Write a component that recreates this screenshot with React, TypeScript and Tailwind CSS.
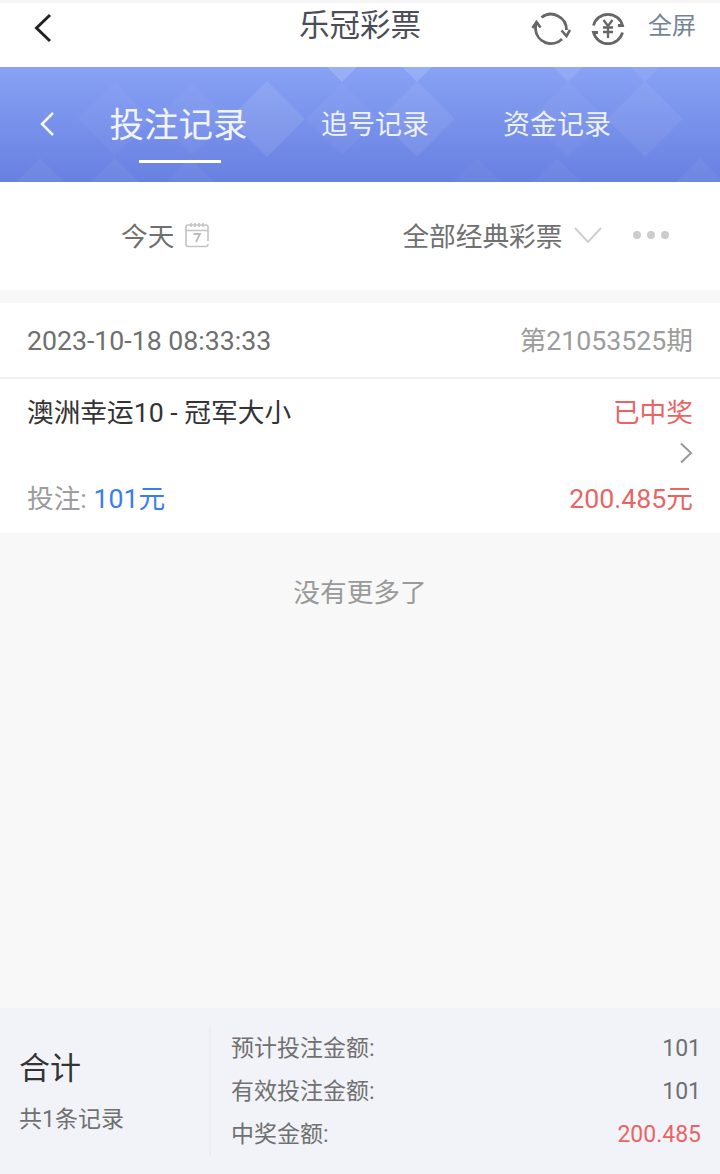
import React from "react";

const diamonds = [
  [115, 119, 37, 0.03], [192, 119, 36, 0.04], [267, 119, 38, 0.09], [342, 67, 15, 0.16], [40, 182, 24, 0.05],
  [115, 182, 24, 0.05], [190, 182, 24, 0.04], [342, 119, 36, 0.04], [417, 119, 38, 0.07], [417, 67, 15, 0.14],
  [568, 67, 15, 0.1], [568, 119, 38, 0.04], [645, 119, 38, 0.06], [645, 67, 15, 0.06], [477, 182, 24, 0.03],
  [557, 182, 24, 0.04], [700, 182, 24, 0.05],
];

const BannerPattern = () => (
  <svg className="absolute inset-0 w-full h-full" viewBox="0 67 720 115" preserveAspectRatio="none">
    {diamonds.map(([x, y, r, o], i) => (
      <polygon key={i} points={`${x},${y - r} ${x + r},${y} ${x},${y + r} ${x - r},${y}`} fill="white" fillOpacity={o} />
    ))}
  </svg>
);

const RefreshIcon = () => (
  <svg width="40" height="40" viewBox="0 0 40 40" fill="none" stroke="#666" strokeWidth="2.800">
    <path d="M10.500 8.500 A15.500 15.500 0 0 1 35.500 21" />
    <path d="M31 30 A15.500 15.500 0 0 1 4.500 20 L5 14" />
    <path d="M1.500 19 L5.500 13 L9.500 18.500" strokeWidth="2.600" />
    <path d="M30.500 21.500 L35.500 27 L39 21" strokeWidth="2.600" />
  </svg>
);

const MoneyIcon = () => (
  <svg width="34" height="34" viewBox="0 0 34 34" fill="none" stroke="#666" strokeWidth="2.800">
    <path d="M2.500 13.500 A15 15 0 0 1 31.500 13.500 H27" />
    <path d="M31.500 20.500 A15 15 0 0 1 2.500 20.500 H7" />
    <path d="M12.500 8 L17 14 L21.500 8 M12 15.500 H22 M12 20 H22 M17 14 V26" strokeWidth="2.300" />
  </svg>
);

const CalendarIcon = () => (
  <svg width="24" height="26" viewBox="0 0 24 26" fill="none" stroke="#c4c4c4" strokeWidth="1.600">
    <path d="M23 19 V5 Q23 3 21 3 H3 Q1 3 1 5 V22 Q1 24.500 3 24.500 H21 Q23 24.500 23 22" />
    <path d="M1 8.500 H23 M6 1 V5 M10 1 V5 M14 1 V5 M18 1 V5" />
    <path d="M8.500 12 H15 L11 20" strokeWidth="1.800" stroke="#bbb" />
  </svg>
);

export default function App() {
  return (
    <div className="w-[720px] h-[1174px] flex flex-col bg-[#f8f8f8] overflow-hidden font-['Roboto','Noto_Sans_CJK_SC',sans-serif]">
      {/* 顶部栏 */}
      <header className="relative h-[67px] shrink-0 bg-white border-t-[3px] border-[#f5f5f5] flex items-center justify-between pl-[33px] pr-[24px]">
        <svg width="20" height="30" viewBox="0 0 20 30" fill="none" stroke="#222" strokeWidth="3" className="mb-[15px]">
          <path d="M17 2 L3.500 15 L17 28" />
        </svg>
        <h1 className="absolute left-0 right-0 top-[2px] text-center text-[30.5px] leading-[42px] text-[#4a4d58]">乐冠彩票</h1>
        <div className="flex items-center mb-[12px]">
          <RefreshIcon />
          <span className="w-[20px]" />
          <MoneyIcon />
          <span className="ml-[23px] text-[24px] leading-[32px] text-[#748494] mb-[6px]">全屏</span>
        </div>
      </header>

      {/* 标签栏 */}
      <nav className="relative h-[115px] shrink-0 bg-gradient-to-b from-[#88a2f5] to-[#6880e1] flex items-center text-white">
        <BannerPattern />
        <svg width="16" height="26" viewBox="0 0 16 26" fill="none" stroke="#f4f6ff" strokeWidth="2.500" className="relative ml-[39px] mb-[1px]">
          <path d="M14 2 L3 13 L14 24" />
        </svg>
        <div className="relative ml-[55px] w-[137px] h-full flex items-center justify-center">
          <span className="text-[34.5px] leading-[44px] text-[#f2f4fd] whitespace-nowrap">投注记录</span>
          <span className="absolute left-[29px] top-[93px] w-[82px] h-[3px] bg-white" />
        </div>
        <span className="relative ml-[74px] text-[27px] leading-[36px] text-[#eef1fd]">追号记录</span>
        <span className="relative ml-[74px] text-[27px] leading-[36px] text-[#eef1fd]">资金记录</span>
      </nav>

      {/* 筛选 */}
      <section className="h-[108px] shrink-0 bg-white flex items-center pb-[2px] text-[26.7px] leading-[36px] text-[#707070]">
        <span className="ml-[121px] mt-[4px]">今天</span>
        <span className="ml-[11px]"><CalendarIcon /></span>
        <span className="ml-[193px] mt-[4px]">全部经典彩票</span>
        <svg width="30" height="18" viewBox="0 0 30 18" fill="none" stroke="#cfcfcf" strokeWidth="2" className="ml-[10px]">
          <path d="M2 2 L15 16 L28 2" />
        </svg>
        <div className="ml-[30px] flex gap-[6px]">
          <span className="w-[8px] h-[8px] rounded-full bg-[#cccccc]" />
          <span className="w-[8px] h-[8px] rounded-full bg-[#cccccc]" />
          <span className="w-[8px] h-[8px] rounded-full bg-[#cccccc]" />
        </div>
      </section>

      {/* 记录 */}
      <section className="mt-[13px] shrink-0 bg-white">
        <div className="h-[76px] border-b-2 border-[#f0f0f0] flex items-center justify-between px-[27px] pt-[2px] text-[26.7px] leading-[36px]">
          <span className="text-[#6f6f6f]">2023-10-18 08:33:33</span>
          <span className="text-[#9c9c9c]">第21053525期</span>
        </div>
        <div className="h-[154px] px-[27px] flex flex-col text-[26.7px] leading-[36px]">
          <div className="flex justify-between mt-[16px]">
            <span className="text-[#333333]">澳洲幸运10 - 冠军大小</span>
            <span className="text-[#e96565]">已中奖</span>
          </div>
          <div className="flex justify-end mt-[11px] h-[24px]">
            <svg width="14" height="22" viewBox="0 0 14 22" fill="none" stroke="#999" strokeWidth="2">
              <path d="M2 1.500 L12 11 L2 20.500" />
            </svg>
          </div>
          <div className="flex justify-between mt-[15px]">
            <span className="text-[#9c9c9c]">投注: <span className="text-[#3b7df0]">101元</span></span>
            <span className="text-[#e96565]">200.485元</span>
          </div>
        </div>
      </section>

      <p className="mt-[42px] text-center text-[26.7px] leading-[36px] text-[#9a9a9a]">没有更多了</p>

      {/* 合计 */}
      <footer className="mt-auto h-[166px] shrink-0 bg-[#f2f3f9] flex items-center">
        <div className="w-[209px] shrink-0 pl-[19px] pt-[3px]">
          <div className="text-[31px] leading-[40px] text-[#333333]">合计</div>
          <div className="mt-[15px] text-[23px] leading-[32px] text-[#707070]">共1条记录</div>
        </div>
        <div className="w-[2px] h-[130px] bg-[#eceef1]" />
        <div className="flex-1 flex flex-col gap-[11px] pl-[20px] pr-[19px] pt-[2px] text-[23px] leading-[32px] text-[#707070]">
          <div className="flex justify-between"><span>预计投注金额:</span><span>101</span></div>
          <div className="flex justify-between"><span>有效投注金额:</span><span>101</span></div>
          <div className="flex justify-between"><span>中奖金额:</span><span className="text-[#e96565]">200.485</span></div>
        </div>
      </footer>
    </div>
  );
}
